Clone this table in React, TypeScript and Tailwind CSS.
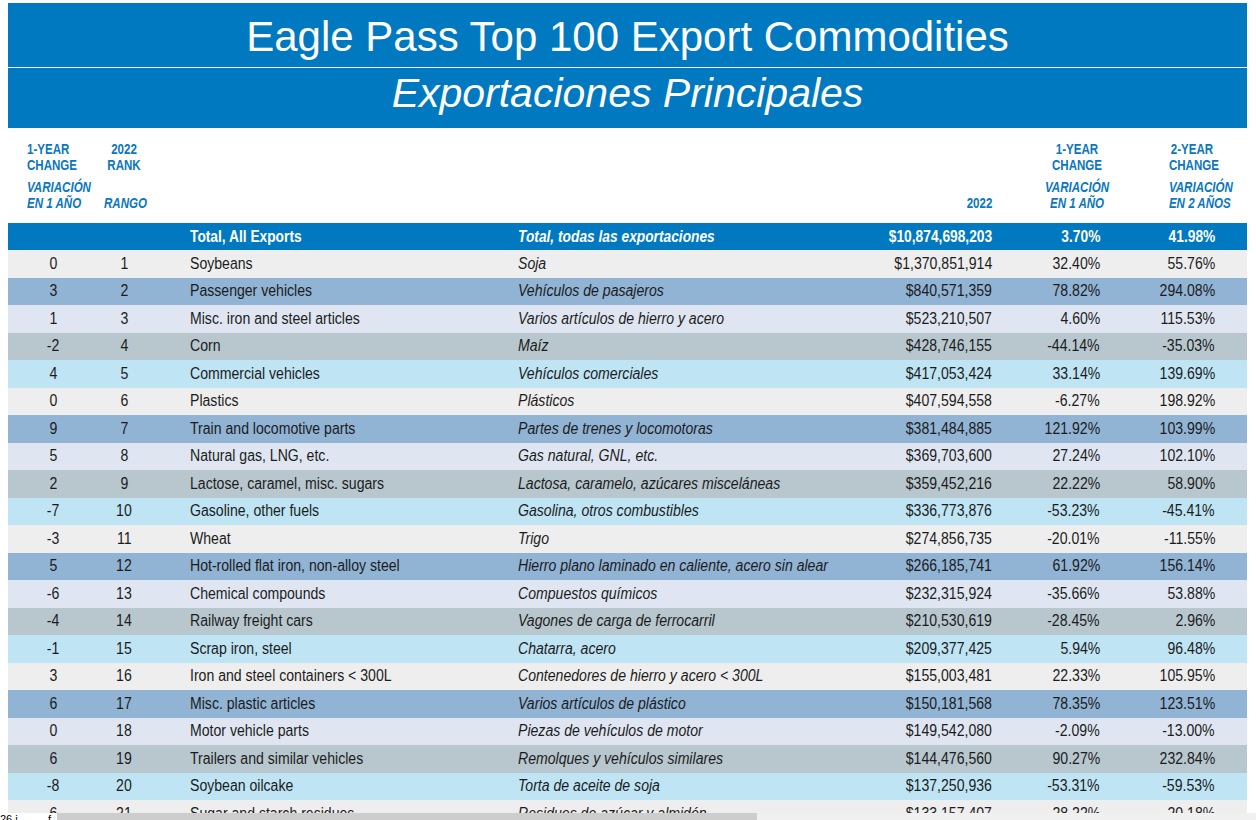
import React from "react";

type Row = [string, string, string, string, string, string, string];

const rows: Row[] = [
  ["0", "1", "Soybeans", "Soja", "$1,370,851,914", "32.40%", "55.76%"],
  ["3", "2", "Passenger vehicles", "Vehículos de pasajeros", "$840,571,359", "78.82%", "294.08%"],
  ["1", "3", "Misc. iron and steel articles", "Varios artículos de hierro y acero", "$523,210,507", "4.60%", "115.53%"],
  ["-2", "4", "Corn", "Maíz", "$428,746,155", "-44.14%", "-35.03%"],
  ["4", "5", "Commercial vehicles", "Vehículos comerciales", "$417,053,424", "33.14%", "139.69%"],
  ["0", "6", "Plastics", "Plásticos", "$407,594,558", "-6.27%", "198.92%"],
  ["9", "7", "Train and locomotive parts", "Partes de trenes y locomotoras", "$381,484,885", "121.92%", "103.99%"],
  ["5", "8", "Natural gas, LNG, etc.", "Gas natural, GNL, etc.", "$369,703,600", "27.24%", "102.10%"],
  ["2", "9", "Lactose, caramel, misc. sugars", "Lactosa, caramelo, azúcares misceláneas", "$359,452,216", "22.22%", "58.90%"],
  ["-7", "10", "Gasoline, other fuels", "Gasolina, otros combustibles", "$336,773,876", "-53.23%", "-45.41%"],
  ["-3", "11", "Wheat", "Trigo", "$274,856,735", "-20.01%", "-11.55%"],
  ["5", "12", "Hot-rolled flat iron, non-alloy steel", "Hierro plano laminado en caliente, acero sin alear", "$266,185,741", "61.92%", "156.14%"],
  ["-6", "13", "Chemical compounds", "Compuestos químicos", "$232,315,924", "-35.66%", "53.88%"],
  ["-4", "14", "Railway freight cars", "Vagones de carga de ferrocarril", "$210,530,619", "-28.45%", "2.96%"],
  ["-1", "15", "Scrap iron, steel", "Chatarra, acero", "$209,377,425", "5.94%", "96.48%"],
  ["3", "16", "Iron and steel containers < 300L", "Contenedores de hierro y acero < 300L", "$155,003,481", "22.33%", "105.95%"],
  ["6", "17", "Misc. plastic articles", "Varios artículos de plástico", "$150,181,568", "78.35%", "123.51%"],
  ["0", "18", "Motor vehicle parts", "Piezas de vehículos de motor", "$149,542,080", "-2.09%", "-13.00%"],
  ["6", "19", "Trailers and similar vehicles", "Remolques y vehículos similares", "$144,476,560", "90.27%", "232.84%"],
  ["-8", "20", "Soybean oilcake", "Torta de aceite de soja", "$137,250,936", "-53.31%", "-59.53%"],
  ["6", "21", "Sugar and starch residues", "Residuos de azúcar y almidón", "$133,157,407", "28.22%", "20.18%"],
];

// five-band colour cycle used by the report
const bands = ["bg-[#eeeeee]", "bg-[#91b3d4]", "bg-[#dfe6f1]", "bg-[#b8c7ce]", "bg-[#bfe4f3]"];

const cols = "grid grid-cols-[90px_52px_368px_342px_132px_108px_115px_32px]";
const sans = "font-['Liberation_Sans',Arial,sans-serif]";

// the print uses a condensed grotesque; squeeze Liberation Sans to match
const origins = { l: "origin-left", r: "origin-right", c: "origin-center" };

const Sq = ({ children, o = "l", bold = false }: { children: React.ReactNode; o?: "l" | "r" | "c"; bold?: boolean }) => (
  <span className={`inline-block whitespace-nowrap ${origins[o]} ${bold ? "scale-x-[0.86]" : "scale-x-[0.88]"}`}>
    {children}
  </span>
);

const Head = ({ children, o = "c" }: { children: React.ReactNode; o?: "l" | "c" }) => (
  <span className={`inline-block whitespace-nowrap scale-x-[0.77] ${origins[o]}`}>{children}</span>
);

const App = () => {
  return (
    <div className="relative w-[1256px] h-[820px] overflow-hidden bg-white">
      <div className="ml-[8px] w-[1239px] pt-[3px]">
        {/* title banner */}
        <div className={`bg-[#0079c1] text-white ${sans}`}>
          <div className="pt-[10px] pb-[6px] text-center text-[42px] leading-[48px]">
            Eagle Pass Top 100 Export Commodities
          </div>
          <div className="h-px bg-white" />
          <div className="pt-[1px] pb-[11px] text-center text-[41px] leading-[48px] italic">
            Exportaciones Principales
          </div>
        </div>

        {/* column headings */}
        <div
          className={`grid grid-cols-[90px_52px_842px_170px_60px_25px] pt-[13px] pb-[12px] text-[15px] leading-[16px] font-bold text-[#0a77bf] ${sans}`}
        >
          <div className="pl-[19px] flex flex-col gap-[6px]">
            <Head o="l">1-YEAR<br />CHANGE</Head>
            <Head o="l"><i>VARIACIÓN<br />EN 1 AÑO</i></Head>
          </div>
          <div className="text-center flex flex-col gap-[6px]">
            <Head>2022<br />RANK</Head>
            <Head><i><br />RANGO</i></Head>
          </div>
          <div className="flex items-end justify-end">
            <span className="inline-block scale-x-[0.77] origin-right">2022</span>
          </div>
          <div className="text-center flex flex-col gap-[6px]">
            <Head>1-YEAR<br />CHANGE</Head>
            <Head><i>VARIACIÓN<br />EN 1 AÑO</i></Head>
          </div>
          <div className="text-center flex flex-col gap-[6px]">
            <Head>2-YEAR<br />CHANGE</Head>
            <Head><i>VARIACIÓN<br />EN 2 AÑOS</i></Head>
          </div>
          <div />
        </div>

        {/* totals */}
        <div className={`${cols} h-[27px] items-center bg-[#0079c1] text-white font-bold text-[16px] ${sans}`}>
          <div />
          <div />
          <div className="pl-[40px]"><Sq bold>Total, All Exports</Sq></div>
          <div className="italic"><Sq bold>Total, todas las exportaciones</Sq></div>
          <div className="text-right"><Sq o="r" bold>$10,874,698,203</Sq></div>
          <div className="text-right"><Sq o="r" bold>3.70%</Sq></div>
          <div className="text-right"><Sq o="r" bold>41.98%</Sq></div>
          <div />
        </div>

        {/* rows */}
        {rows.map((r, i) => (
          <div
            key={r[1]}
            className={`${cols} h-[27.5px] items-center text-[16px] text-[#1c1c1c] ${sans} ${bands[i % 5]}`}
          >
            <div className="text-center"><Sq o="c">{r[0]}</Sq></div>
            <div className="text-center"><Sq o="c">{r[1]}</Sq></div>
            <div className="pl-[40px]"><Sq>{r[2]}</Sq></div>
            <div className="italic"><Sq>{r[3]}</Sq></div>
            <div className="text-right"><Sq o="r">{r[4]}</Sq></div>
            <div className="text-right"><Sq o="r">{r[5]}</Sq></div>
            <div className="text-right"><Sq o="r">{r[6]}</Sq></div>
            <div />
          </div>
        ))}
      </div>

      {/* viewer scroll strip along the bottom */}
      <div className="absolute left-0 right-0 bottom-0 h-[7px] flex bg-[#f0f0f0] overflow-hidden">
        <div className={`w-[57px] bg-white relative text-[11px] leading-[11px] text-black ${sans}`}>
          <span className="absolute left-0 top-[1px]">26 i</span>
          <span className="absolute left-[48px] top-[1px]">f</span>
        </div>
        <div className="w-[700px] bg-[#cdcdcd]" />
      </div>
    </div>
  );
};

export default App;
